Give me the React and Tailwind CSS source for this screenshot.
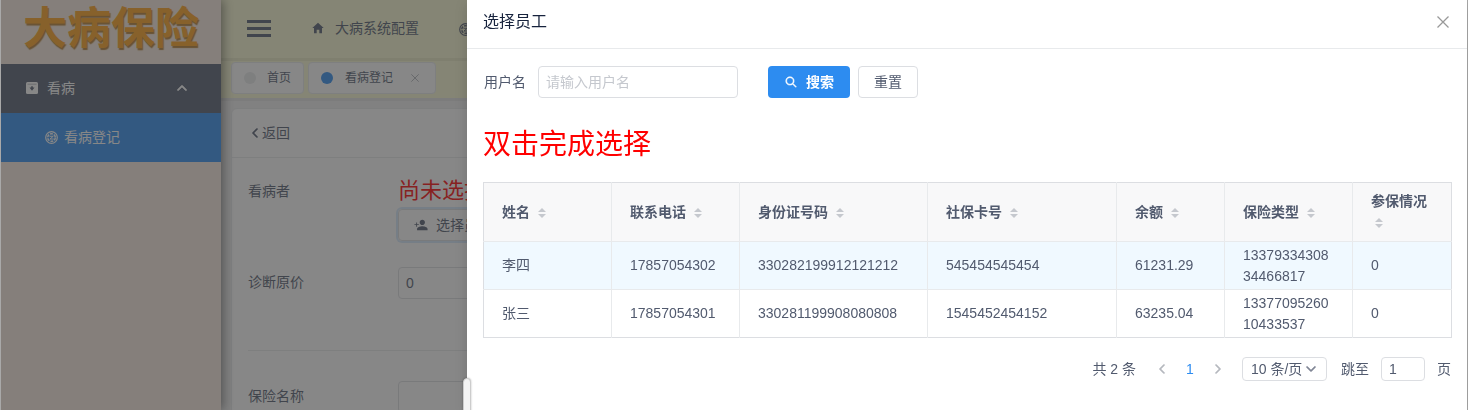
import React from "react";
import {
  IoIosArrowBack,
  IoIosArrowDown,
  IoIosArrowForward,
  IoIosArrowUp,
  IoIosSearch,
  IoMdHome,
  IoMdPersonAdd,
} from "react-icons/io";

const columns = [
  { title: "姓名", width: "w-[128px]" },
  { title: "联系电话", width: "w-[128px]" },
  { title: "身份证号码", width: "w-[188px]" },
  { title: "社保卡号", width: "w-[189px]" },
  { title: "余额", width: "w-[108px]" },
  { title: "保险类型", width: "w-[128px]" },
  { title: "参保情况", width: "w-[99px]" },
];

const rows = [
  ["李四", "17857054302", "330282199912121212", "545454545454", "61231.29", "1337933430834466817", "0"],
  ["张三", "17857054301", "330281199908080808", "1545452454152", "63235.04", "1337709526010433537", "0"],
];

function ArchiveIcon({ className }) {
  return (
    <svg viewBox="0 0 12 12" className={className} aria-hidden="true">
      <rect width="12" height="12" rx="1.500" fill="currentColor" />
      <path d="M1.500 2.200h9" stroke="#515a6e" strokeWidth="0.4" />
      <path d="M5.200 4.200h1.600v1.300h1.700L6 8.700 3.500 5.500h1.700z" fill="#515a6e" />
    </svg>
  );
}

function ApertureIcon({ className }) {
  return (
    <svg viewBox="0 0 26 26" className={className} fill="none" stroke="currentColor" aria-hidden="true">
      <circle cx="13" cy="13" r="11.600" strokeWidth="2.400" />
      <circle cx="13" cy="13" r="7.600" strokeWidth="3" strokeDasharray="5.800 2.160" />
      <path d="M9 10.500h7.500L10 16h7.500" strokeWidth="2" />
    </svg>
  );
}

function CloseIcon({ className }) {
  return (
    <svg viewBox="0 0 12 12" className={className} fill="none" stroke="currentColor" strokeWidth="1.300" aria-hidden="true">
      <path d="M0.500 0.500l11 11M11.500 0.500l-11 11" />
    </svg>
  );
}

function Sorter() {
  return (
    <button type="button" aria-label="排序" className="ml-1 inline-block h-3 w-2 align-middle text-[#c5c8ce]">
      <svg viewBox="0 0 8 12" className="block h-3 w-2" fill="currentColor" aria-hidden="true">
        <path d="M4 1 8 5H0zM4 11 0 7h8z" />
      </svg>
    </button>
  );
}

function Sidebar() {
  return (
    <aside className="z-10 w-[220px] shrink-0 bg-[#faece1] shadow-[2px_0_10px_rgba(0,0,0,0.5)]">
      <div className="flex h-16 items-start justify-center">
        <span className="text-[44px] leading-[58px] font-bold text-[#ffa11a] [text-shadow:1px_2px_1px_#b37a2c]">大病保险</span>
      </div>
      <nav>
        <button type="button" className="flex h-[49px] w-full items-center bg-[#515a6e] pr-8 pb-px pl-[25px] text-white">
          <ArchiveIcon className="size-3" />
          <span className="ml-[9px] flex-1 text-left">看病</span>
          <IoIosArrowUp className="size-[14px] stroke-current" strokeWidth="24" />
        </button>
        <a href="#register" className="flex h-[49px] items-center bg-[#2d8cf0] pb-px pl-[44px] text-white">
          <ApertureIcon className="size-[13px]" />
          <span className="ml-[6px]">看病登记</span>
        </a>
      </nav>
    </aside>
  );
}

function Workspace() {
  return (
    <div className="flex min-w-0 flex-1 flex-col bg-[#f0f0f0]">
      <header className="flex h-[61px] shrink-0 items-center border-b-3 border-[#eaeac4] bg-[#fafad2] pl-[26px]">
        <button type="button" aria-label="折叠菜单" className="flex w-6 flex-col gap-1 pb-[2px]">
          <span className="h-[3px] bg-[#515a6e]" />
          <span className="h-[3px] bg-[#515a6e]" />
          <span className="h-[3px] bg-[#515a6e]" />
        </button>
        <a href="#config" className="ml-10 flex items-center pb-[2px] whitespace-nowrap">
          <IoMdHome className="size-[14px]" />
          <span className="ml-[10px]">大病系统配置</span>
        </a>
        <a href="#claims" aria-label="保险" className="ml-10">
          <ApertureIcon className="size-[13px]" />
        </a>
      </header>
      <div className="flex h-[40px] shrink-0 items-start gap-1 border-b-3 border-[#e4e4e4] bg-[#fafad2] px-[10px] pt-px text-xs">
        <a href="#home" className="flex h-8 items-center rounded-sm border border-[#e8eaec] bg-white px-3">
          <span className="size-3 rounded-full bg-[#e8eaec]" />
          <span className="ml-[11px]">首页</span>
        </a>
        <div className="flex h-8 items-center rounded-sm border border-[#e8eaec] bg-white px-3">
          <span className="size-3 rounded-full bg-[#2d8cf0]" />
          <span className="ml-3">看病登记</span>
          <button type="button" aria-label="关闭标签" className="mr-1 ml-[18px] text-[#a5a9b0]">
            <CloseIcon className="size-2" />
          </button>
        </div>
      </div>
      <main className="mx-[10px] mt-[7px] flex-1 rounded-t-md border border-[#e8eaec] bg-white">
        <div className="flex h-[49px] items-center border-b border-[#e8eaec] px-4">
          <a href="#back" className="flex items-center">
            <IoIosArrowBack className="size-[14px] stroke-current" strokeWidth="16" />
            返回
          </a>
        </div>
        <div className="px-4 pt-4">
          <div className="flex">
            <span className="w-[150px] leading-[34px]">看病者</span>
            <div>
              <p className="pb-px text-[22px] leading-[34px] whitespace-nowrap text-[red]">尚未选择</p>
              <button type="button" className="flex h-8 items-center rounded-sm border border-[#dcdee2] px-[15px] whitespace-nowrap ring-2 ring-[#2d8cf0]/20">
                <IoMdPersonAdd className="size-[14px]" />
                <span className="ml-2">选择员工</span>
              </button>
            </div>
          </div>
          <div className="mt-[26px] flex items-center border-b border-[#e8eaec] pb-[51px]">
            <label htmlFor="price" className="w-[150px] pb-[2px]">诊断原价</label>
            <input id="price" defaultValue="0" className="h-8 w-[200px] rounded-sm border border-[#dcdee2] px-[7px]" />
          </div>
          <div className="mt-[30px] flex items-center">
            <label htmlFor="plan" className="w-[150px] pb-[2px]">保险名称</label>
            <input id="plan" className="h-8 w-[200px] rounded-sm border border-[#dcdee2] px-[7px]" />
          </div>
        </div>
      </main>
    </div>
  );
}

function EmployeeTable() {
  return (
    <table className="w-full table-fixed border-collapse border border-[#dcdee2] text-left">
      <colgroup>
        {columns.map((c) => (
          <col key={c.title} className={c.width} />
        ))}
      </colgroup>
      <thead className="bg-[#f8f8f9]">
        <tr className="h-[59px]">
          {columns.map((c) => (
            <th key={c.title} className="border-r border-b border-[#e8eaec] px-[18px] leading-[21px] font-bold last:border-r-0">
              {c.title} <Sorter />
            </th>
          ))}
        </tr>
      </thead>
      <tbody>
        {rows.map((row) => (
          <tr key={row[1]} className="group h-12 first:bg-[#f0f9ff]">
            {row.map((value, i) => (
              <td
                key={columns[i].title}
                className="border-r border-b border-[#e8eaec] px-[18px] leading-[21px] break-all group-last:border-b-0 last:border-r-0"
              >
                {value}
              </td>
            ))}
          </tr>
        ))}
      </tbody>
    </table>
  );
}

function Pagination() {
  return (
    <div className="mt-[19px] flex h-6 items-center justify-end">
      <span className="mr-[14px]">共 2 条</span>
      <button type="button" aria-label="上一页" className="flex w-6 justify-center text-[#b5b8be]">
        <IoIosArrowBack className="size-[14px] stroke-current" strokeWidth="16" />
      </button>
      <button type="button" aria-current="page" className="mx-1 w-6 text-center text-[#2d8cf0]">1</button>
      <button type="button" aria-label="下一页" className="flex w-6 justify-center text-[#b5b8be]">
        <IoIosArrowForward className="size-[14px] stroke-current" strokeWidth="16" />
      </button>
      <div className="ml-3 grid h-6 w-[85px] items-center rounded-sm border border-[#dcdee2]">
        <select aria-label="每页条数" className="col-start-1 row-start-1 h-[22px] appearance-none bg-transparent pl-2 leading-[22px]">
          <option>10 条/页</option>
          <option>20 条/页</option>
        </select>
        <IoIosArrowDown className="pointer-events-none col-start-1 row-start-1 mr-2 size-[14px] justify-self-end stroke-current text-[#808695]" strokeWidth="16" />
      </div>
      <label htmlFor="jump" className="ml-[14px]">跳至</label>
      <input id="jump" defaultValue="1" className="mx-3 h-6 w-11 rounded-sm border border-[#dcdee2] px-[7px]" />
      <span>页</span>
    </div>
  );
}

function EmployeeDrawer() {
  return (
    <section role="dialog" aria-labelledby="drawer-title" className="fixed inset-y-0 right-px z-30 w-[1000px] max-w-full bg-white shadow-[0_4px_12px_rgba(0,0,0,0.15)]">
      <header className="flex h-[49px] items-center justify-between border-b border-[#e8eaec] px-4 pb-1">
        <h2 id="drawer-title" className="text-base text-[#17233d]">选择员工</h2>
        <button type="button" aria-label="关闭" className="mr-[2px] text-[#999]">
          <CloseIcon className="size-3" />
        </button>
      </header>
      <div className="px-4 pt-[17px]">
        <form className="flex items-center">
          <label htmlFor="username" className="mr-3 ml-px">用户名</label>
          <input id="username" placeholder="请输入用户名" className="h-8 w-[200px] rounded-sm border border-[#dcdee2] px-[7px] placeholder:text-[#c5c8ce]" />
          <button type="button" className="ml-[30px] flex h-8 items-center rounded-sm bg-[#2d8cf0] px-4 font-bold text-white">
            <IoIosSearch className="size-[14px] stroke-current" strokeWidth="20" />
            <span className="ml-2">搜索</span>
          </button>
          <button type="button" className="ml-2 h-8 rounded-sm border border-[#dcdee2] px-[15px]">重置</button>
        </form>
        <p className="mt-[26px] mb-4 text-[28px] leading-[42px] text-[red]">双击完成选择</p>
        <EmployeeTable />
        <Pagination />
      </div>
      <div className="absolute top-[378px] -left-1 h-[100px] w-2 rounded-md border border-[#ccc] bg-[#f3f3f3] shadow-[0_0_2px_rgba(0,0,0,0.3)]" />
    </section>
  );
}

export default function App() {
  return (
    <div className="h-screen overflow-hidden border-x border-[#a9a9a9] font-['Liberation_Sans','Noto_Sans_CJK_SC',sans-serif] text-sm text-[#515a6e]">
      <div className="flex h-full overflow-hidden">
        <Sidebar />
        <Workspace />
      </div>
      <div className="fixed inset-y-0 right-px left-px z-20 bg-[#373737]/60" />
      <EmployeeDrawer />
    </div>
  );
}
